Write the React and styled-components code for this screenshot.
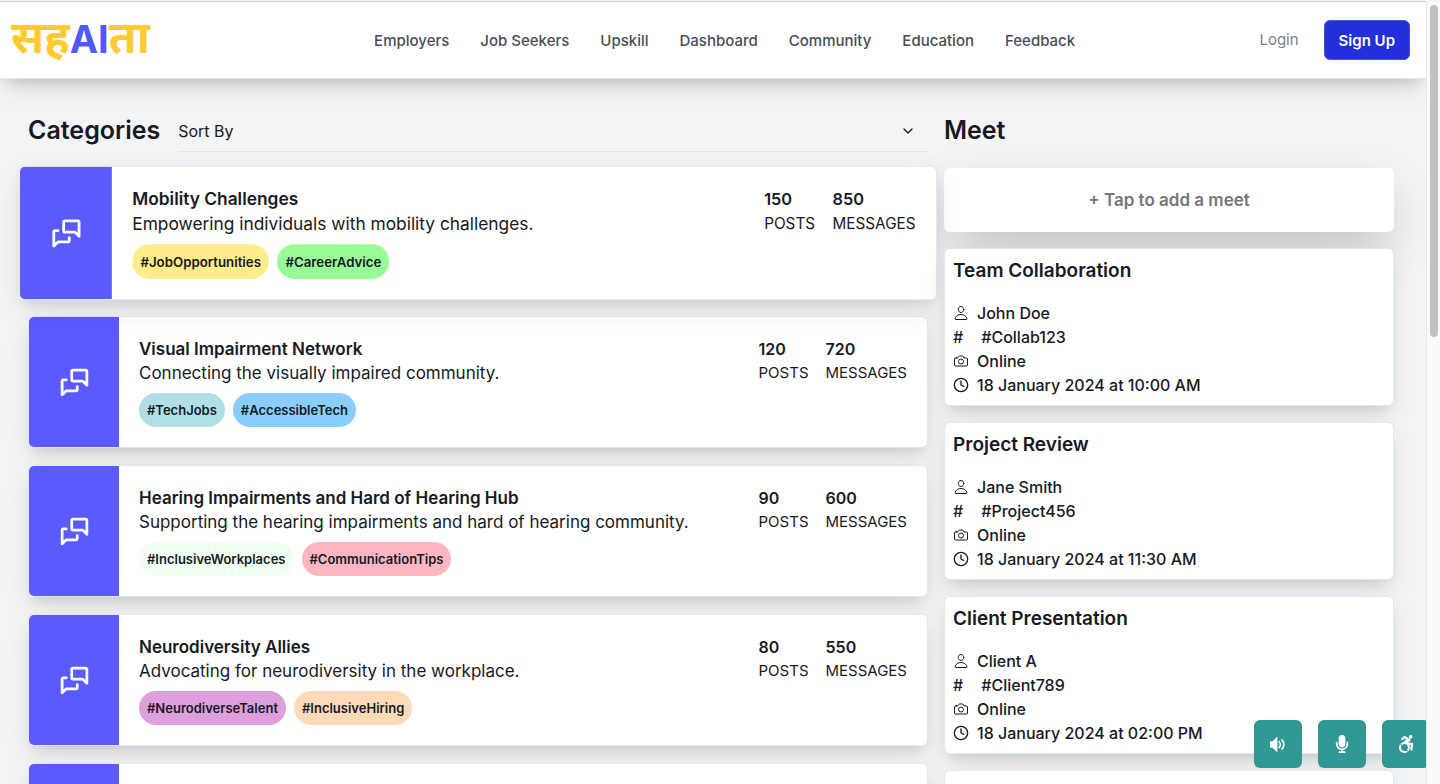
import React from 'react'
import styled, { createGlobalStyle } from 'styled-components'
import { TbMessages } from 'react-icons/tb'
import { IoPersonOutline, IoCameraOutline } from 'react-icons/io5'
import { FiClock, FiChevronDown } from 'react-icons/fi'
import { FaMicrophone, FaAccessibleIcon } from 'react-icons/fa'
import { ImVolumeMedium } from 'react-icons/im'

const GlobalStyle = createGlobalStyle`
	*, *::before, *::after {
		box-sizing: border-box;
	}
	body {
		margin: 0;
		background: #f3f4f6;
		color: #171923;
		font-family: Inter, 'Noto Sans', sans-serif;
		font-size: 16px;
		line-height: 24px;
	}
	h2, h3, p, ul {
		margin: 0;
		padding: 0;
	}
	button, select {
		font-family: inherit;
		color: inherit;
		margin: 0;
	}
`

const Page = styled.div`
	height: 100vh;
	overflow: hidden;
	padding-right: 14px;
	border-top: 1px solid #f5f5f5;
`

const Header = styled.header`
	display: flex;
	align-items: center;
	height: 78px;
	padding: 0 16px 0 11px;
	background: #fff;
	border-top: 1px solid #cfd2d1;
	border-bottom: 1px solid #e6e8ee;
	box-shadow: 0 20px 25px -5px rgba(0, 0, 0, 0.06), 0 8px 14px -6px rgba(0, 0, 0, 0.2);
`

const Logo = styled.a`
	padding-bottom: 4px;
	color: #ffcb30;
	font-family: Inter, 'Noto Sans Devanagari', 'Noto Sans', sans-serif;
	font-size: 45px;
	font-weight: 700;
	line-height: 56px;
	text-decoration: none;
	white-space: nowrap;

	span {
		color: #5158ff;
		font-size: 38px;
	}
`

const Nav = styled.nav`
	flex: 1;
	display: flex;
	justify-content: center;
	gap: 31px;
	padding: 2px 0 0 40px;
`

const NavLink = styled.a`
	color: #4a4c57;
	font-size: 15px;
	font-weight: 500;
	text-decoration: none;
	white-space: nowrap;
`

const Actions = styled.div`
	display: flex;
	align-items: center;
	gap: 25px;
`

const LoginLink = styled.a`
	color: #7d7e84;
	font-size: 15px;
	text-decoration: none;
`

const SignUpButton = styled.button`
	height: 40px;
	padding: 0 14px;
	border: 1px solid #4450e2;
	border-radius: 6px;
	background: #2130d8;
	color: #fff;
	font-size: 15px;
	font-weight: 600;
	white-space: nowrap;
`

const Main = styled.main`
	display: grid;
	grid-template-columns: 2fr 1fr;
	column-gap: 16px;
	padding: 31px 32px 0 28px;
`

const ColumnHeader = styled.div`
	display: flex;
	align-items: center;
	gap: 18px;
	height: 42px;
`

const Heading = styled.h2`
	margin-bottom: 2px;
	font-size: 25px;
	font-weight: 600;
	line-height: 36px;
`

const SortBox = styled.div`
	position: relative;
	flex: 1;
	height: 42px;
	border-bottom: 1px solid #e2e4e8;

	svg {
		position: absolute;
		right: 12px;
		top: 13px;
		pointer-events: none;
	}
`

const SortSelect = styled.select`
	width: 100%;
	height: 41px;
	padding: 0;
	border: 0;
	outline: 0;
	background: transparent;
	appearance: none;
	font-size: 16px;
`

const CategoryList = styled.div`
	display: flex;
	flex-direction: column;
	gap: 17px;
	margin-top: 15px;
`

const CategoryCard = styled.article`
	display: flex;
	overflow: hidden;
	min-height: 132px;
	border: 1px solid #e2e8f0;
	border-radius: 6px;
	background: #fff;
	box-shadow: 0 10px 28px rgba(0, 0, 0, 0.08), 0 8px 12px -6px rgba(0, 0, 0, 0.14);
	transform: ${props => (props.$hovered ? 'scale(1.02)' : 'none')};
`

const IconPanel = styled.div`
	display: flex;
	align-items: center;
	justify-content: center;
	flex: 0 0 90px;
	background: #5a5aff;
	color: #fff;
`

const CategoryBody = styled.div`
	flex: 1;
	display: flex;
	justify-content: space-between;
	padding: 20px;
`

const CategoryTitle = styled.h3`
	font-size: 17px;
	font-weight: 600;
	line-height: 24px;
`

const Description = styled.p`
	font-size: 17px;
`

const Tags = styled.div`
	display: flex;
	gap: 8px;
	margin-top: 8px;
`

const Tag = styled.span`
	padding: 0 8px;
	border-radius: 17px;
	background: ${props => props.$color};
	font-size: 13px;
	font-weight: 600;
	line-height: 34px;
`

const Stats = styled.div`
	display: flex;
	gap: 17px;
`

const Stat = styled.p`
	font-size: 15px;

	strong {
		display: block;
		font-size: 16px;
		font-weight: 600;
	}
`

const AddMeet = styled.button`
	width: 100%;
	height: 64px;
	margin: 16px 0;
	border: 0;
	border-radius: 6px;
	background: #fff;
	color: #75777d;
	font-size: 17px;
	font-weight: 600;
	box-shadow: 0 20px 50px -8px rgba(0, 0, 0, 0.25);
`

const MeetCard = styled.article`
	position: relative;
	margin-bottom: 16px;
	padding: 8px;
	border: 1px solid #e2e8f0;
	border-radius: 6px;
	background: #fff;
	box-shadow: 0 10px 28px rgba(0, 0, 0, 0.08), 0 8px 12px -6px rgba(0, 0, 0, 0.14);
`

const MeetTitle = styled.h3`
	margin-bottom: 16px;
	font-size: 19px;
	font-weight: 600;
	line-height: 28px;
`

const MeetRow = styled.p`
	display: flex;
	align-items: center;
	gap: ${props => (props.$wide ? '18px' : '8px')};
	font-size: 16px;
	font-weight: 500;
`

const FloatingButtons = styled.div`
	position: fixed;
	right: 10px;
	bottom: 16px;
	display: flex;
	gap: 16px;
`

const FloatingButton = styled.button`
	display: flex;
	align-items: center;
	justify-content: center;
	width: 48px;
	height: 48px;
	border: 0;
	border-radius: 6px;
	background: #319795;
	color: #fff;
`

const ScrollTrack = styled.div`
	position: fixed;
	top: 2px;
	right: 0;
	bottom: 0;
	width: 14px;
	padding: 3px 2px 0 3px;
	border-left: 1px solid #e8e8e8;
	background: #fafafa;
`

const ScrollThumb = styled.div`
	height: 332px;
	border-radius: 4px;
	background: #c1c1c3;
`

const links = ['Employers', 'Job Seekers', 'Upskill', 'Dashboard', 'Community', 'Education', 'Feedback']

const categories = [
	{
		title: 'Mobility Challenges',
		description: 'Empowering individuals with mobility challenges.',
		posts: 150,
		messages: 850,
		tags: [['#JobOpportunities', '#ffec8b'], ['#CareerAdvice', '#98fb98']],
		hovered: true,
	},
	{
		title: 'Visual Impairment Network',
		description: 'Connecting the visually impaired community.',
		posts: 120,
		messages: 720,
		tags: [['#TechJobs', '#b0e0e6'], ['#AccessibleTech', '#87cefa']],
	},
	{
		title: 'Hearing Impairments and Hard of Hearing Hub',
		description: 'Supporting the hearing impairments and hard of hearing community.',
		posts: 90,
		messages: 600,
		tags: [['#InclusiveWorkplaces', '#f0fff0'], ['#CommunicationTips', '#ffb6c1']],
	},
	{
		title: 'Neurodiversity Allies',
		description: 'Advocating for neurodiversity in the workplace.',
		posts: 80,
		messages: 550,
		tags: [['#NeurodiverseTalent', '#dda0dd'], ['#InclusiveHiring', '#ffdab9']],
	},
	{ title: '', description: '', tags: [] },
]

const meets = [
	{ title: 'Team Collaboration', host: 'John Doe', code: '#Collab123', date: '18 January 2024 at 10:00 AM' },
	{ title: 'Project Review', host: 'Jane Smith', code: '#Project456', date: '18 January 2024 at 11:30 AM' },
	{ title: 'Client Presentation', host: 'Client A', code: '#Client789', date: '18 January 2024 at 02:00 PM' },
]

const Category = ({ category }) => (
	<CategoryCard $hovered={category.hovered}>
		<IconPanel>
			<TbMessages size={33} />
		</IconPanel>
		<CategoryBody>
			<div>
				<CategoryTitle>{category.title}</CategoryTitle>
				<Description>{category.description}</Description>
				<Tags>
					{category.tags.map(([name, color]) => (
						<Tag key={name} $color={color}>
							{name}
						</Tag>
					))}
				</Tags>
			</div>
			{category.posts && (
				<Stats>
					<Stat>
						<strong>{category.posts}</strong>
						POSTS
					</Stat>
					<Stat>
						<strong>{category.messages}</strong>
						MESSAGES
					</Stat>
				</Stats>
			)}
		</CategoryBody>
	</CategoryCard>
)

const Meet = ({ meet }) => (
	<MeetCard>
		<MeetTitle>{meet.title}</MeetTitle>
		<MeetRow>
			<IoPersonOutline size={16} />
			{meet.host}
		</MeetRow>
		<MeetRow $wide>
			<span>#</span>
			{meet.code}
		</MeetRow>
		<MeetRow>
			<IoCameraOutline size={16} />
			Online
		</MeetRow>
		<MeetRow>
			<FiClock size={16} />
			{meet.date}
		</MeetRow>
	</MeetCard>
)

class App extends React.Component {
	render() {
		return (
			<Page>
				<GlobalStyle />
				<Header>
					<Logo href="#">
						सह<span>AI</span>ता
					</Logo>
					<Nav>
						{links.map(link => (
							<NavLink key={link} href="#">
								{link}
							</NavLink>
						))}
					</Nav>
					<Actions>
						<LoginLink href="#">Login</LoginLink>
						<SignUpButton>Sign Up</SignUpButton>
					</Actions>
				</Header>
				<Main>
					<section>
						<ColumnHeader>
							<Heading>Categories</Heading>
							<SortBox>
								<SortSelect aria-label="Sort By">
									<option>Sort By</option>
								</SortSelect>
								<FiChevronDown size={16} />
							</SortBox>
						</ColumnHeader>
						<CategoryList>
							{categories.map(category => (
								<Category key={category.title} category={category} />
							))}
						</CategoryList>
					</section>
					<section>
						<ColumnHeader>
							<Heading>Meet</Heading>
						</ColumnHeader>
						<AddMeet>+ Tap to add a meet</AddMeet>
						{meets.map(meet => (
							<Meet key={meet.title} meet={meet} />
						))}
						<MeetCard />
					</section>
				</Main>
				<FloatingButtons>
					<FloatingButton aria-label="Read aloud">
						<ImVolumeMedium size={17} />
					</FloatingButton>
					<FloatingButton aria-label="Voice input">
						<FaMicrophone size={18} />
					</FloatingButton>
					<FloatingButton aria-label="Accessibility">
						<FaAccessibleIcon size={18} />
					</FloatingButton>
				</FloatingButtons>
				<ScrollTrack>
					<ScrollThumb />
				</ScrollTrack>
			</Page>
		)
	}
}

export default App
